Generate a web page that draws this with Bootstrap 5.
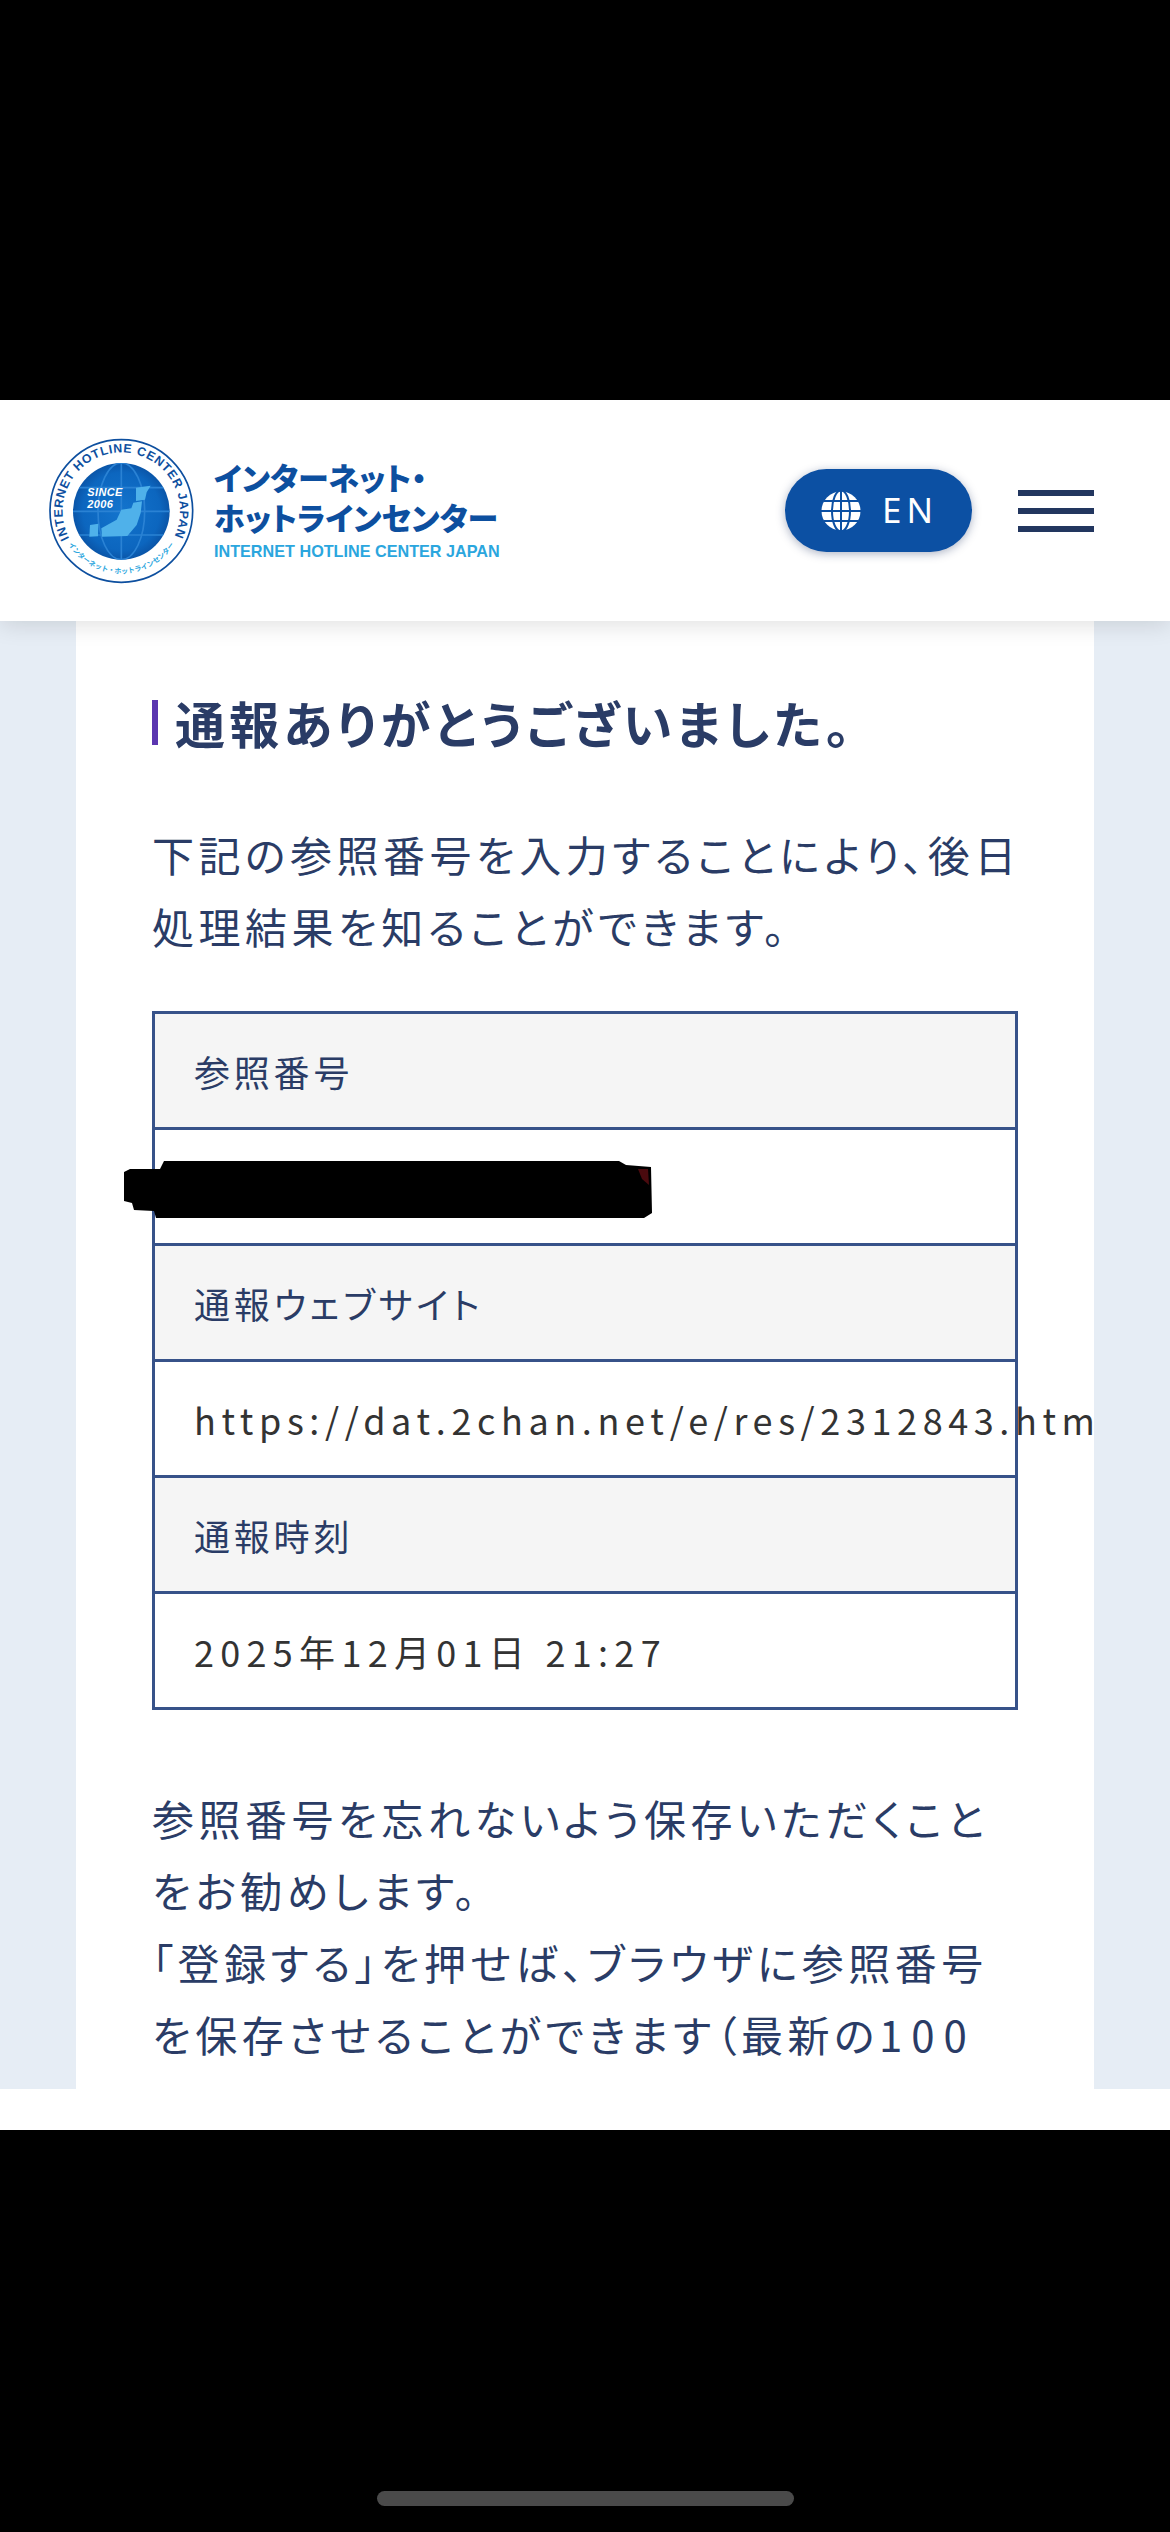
<!DOCTYPE html>
<html lang="ja">
<head>
<meta charset="utf-8">
<title>通報ありがとうございました。</title>
<link href="https://cdn.jsdelivr.net/npm/bootstrap@5.3.0/dist/css/bootstrap.min.css" rel="stylesheet">
<style>
html,body{background:#000;margin:0}
body{width:1170px;height:2532px;overflow:hidden;font-family:"Noto Sans CJK JP","Liberation Sans",sans-serif;color:#2a3c66}
.bar-black-top{height:400px;background:#000}
.site-head{height:221px;background:#fff;padding:0 76px 0 30px;box-shadow:0 4px 22px rgba(0,0,0,.12);position:relative;z-index:2}
.logo-mark{width:180px;height:180px;flex:none}
.logo-words{margin-left:4px;font-weight:900;color:#0d4f9f;font-feature-settings:"palt"}
.logo-jp{font-size:31px;line-height:40px;letter-spacing:0;white-space:nowrap}
.logo-en{font-family:"Liberation Sans",sans-serif;font-weight:700;font-size:16.2px;line-height:26px;color:#2ba6de;white-space:nowrap;margin-top:1px}
.lang-pill{width:187px;height:83px;border-radius:42px;background:#0c50a3;box-shadow:0 2px 10px rgba(20,40,90,.35);color:#fff;gap:21px;font-family:"Noto Sans",sans-serif;font-size:35px;letter-spacing:5px;padding-left:2px}
.lang-pill svg{width:40px;height:42px}
.burger{width:76px;gap:12px;margin-left:46px}
.burger i{display:block;height:6px;background:#22365f}
.page-wrap{height:1468px;background:#e6edf5;padding:0 76px;overflow:hidden}
.sheet{background:#fff;height:100%;padding:79px 76px 0;overflow:hidden;position:relative}
.thanks{border-left:6px solid #5b36b0;padding-left:17px;font-size:50px;line-height:45px;font-weight:700;letter-spacing:4.2px;margin:0 0 73px;color:#2a3c66;font-feature-settings:"palt";white-space:nowrap}
.body-copy{font-size:42px;line-height:72px;letter-spacing:4.5px;font-feature-settings:"palt";margin:0;white-space:nowrap}
.wide-num{letter-spacing:9px}
.ref-table{width:866px;border-collapse:collapse;margin:49px 0 72px;table-layout:fixed}
.ref-table td{height:116px;border:3px solid #375289;padding:0 0 0 39px;font-size:36px;white-space:nowrap;vertical-align:middle;overflow:visible;font-feature-settings:"palt"}
.ref-table td.lab{background:#f5f5f5;color:#2a3c66;letter-spacing:3.8px}
.ref-table td.val{background:#fff;color:#333;letter-spacing:5.6px}
.ref-table td.val.stamp{letter-spacing:6.3px}
.scribble{position:absolute;left:48px;top:538px;width:528px;height:60px}
.white-strip{height:41px;background:#fff}
.bar-black-bottom{height:402px;background:#000;padding-top:361px}
.home-bar{width:417px;height:15px;border-radius:8px;background:#4a4a4a;margin:0 auto 0 377px}
</style>
</head>
<body>
<div class="bar-black-top"></div>
<header class="site-head d-flex align-items-center">
  <svg class="logo-mark" viewBox="0 0 540 540" role="img" aria-label="INTERNET HOTLINE CENTER JAPAN">
    <defs>
      <path id="arcTop" d="M 118 352 A 176 176 0 1 1 430 352"/>
      <path id="arcBot" d="M 104 350 A 188 188 0 0 0 444 350"/>
      <clipPath id="globeClip"><circle cx="274" cy="271" r="145"/></clipPath>
      <radialGradient id="globeFill" cx="50%" cy="50%" r="50%">
        <stop offset="0" stop-color="#1374cd"/><stop offset=".8" stop-color="#0c66bf"/><stop offset="1" stop-color="#0a55a8"/>
      </radialGradient>
    </defs>
    <circle cx="274" cy="270" r="214" fill="#fff" stroke="#0d4f9f" stroke-width="5"/>
    <circle cx="274" cy="271" r="145" fill="url(#globeFill)"/>
    <g clip-path="url(#globeClip)" fill="none" stroke="#2a82d4" stroke-width="5">
      <ellipse cx="274" cy="271" rx="70" ry="145"/>
      <path d="M274 126V416M129 271H419M140 200H408M140 342H408"/>
    </g>
    <g fill="#4fb1ea">
      <path d="M318 200L362 194 350 214 345 236 318 240Z"/>
      <path d="M310 245L336 241 332 276 320 312 292 345 216 347 214 322 260 296 274 266 304 262Z"/>
      <path d="M180 312L205 308 204 346 178 347Z"/>
    </g>
    <text x="172" y="226" fill="#fff" font-family="Liberation Sans, sans-serif" font-weight="700" font-style="italic" font-size="33" letter-spacing="1">SINCE</text>
    <text x="172" y="262" fill="#fff" font-family="Liberation Sans, sans-serif" font-weight="700" font-style="italic" font-size="33" letter-spacing="1">2006</text>
    <text font-family="Liberation Sans, sans-serif" font-weight="700" font-size="37" fill="#0d4f9f"><textPath href="#arcTop" textLength="715" lengthAdjust="spacing">INTERNET HOTLINE CENTER JAPAN</textPath></text>
    <text font-family="Noto Sans CJK JP, sans-serif" font-weight="700" font-size="21" fill="#2ba6de"><textPath href="#arcBot" startOffset="50%" text-anchor="middle">インターネット・ホットラインセンター</textPath></text>
  </svg>
  <div class="logo-words">
    <div class="logo-jp">インターネット・</div>
    <div class="logo-jp">ホットラインセンター</div>
    <div class="logo-en">INTERNET HOTLINE CENTER JAPAN</div>
  </div>
  <div class="lang-pill d-flex align-items-center justify-content-center ms-auto">
    <svg viewBox="0 0 40 42" aria-hidden="true">
      <circle cx="20" cy="21" r="19.5" fill="#fff"/>
      <g fill="none" stroke="#0c50a3" stroke-width="2">
        <ellipse cx="20" cy="21" rx="9" ry="20.5"/>
        <path d="M20 0V42M0 21H40M3 11H37M3 31H37"/>
      </g>
    </svg>
    <span>EN</span>
  </div>
  <div class="burger d-flex flex-column"><i></i><i></i><i></i></div>
</header>
<main class="page-wrap">
  <div class="sheet">
    <h1 class="thanks">通報ありがとうございました。</h1>
    <p class="body-copy">下記の参照番号を入力することにより、後日<br>処理結果を知ることができます。</p>
    <table class="ref-table">
      <tbody>
        <tr><td class="lab">参照番号</td></tr>
        <tr><td class="val">&nbsp;</td></tr>
        <tr><td class="lab">通報ウェブサイト</td></tr>
        <tr><td class="val">https://dat.2chan.net/e/res/2312843.html</td></tr>
        <tr><td class="lab">通報時刻</td></tr>
        <tr><td class="val stamp">2025年12月01日 21:27</td></tr>
      </tbody>
    </table>
    <p class="body-copy">参照番号を忘れないよう保存いただくこと<br>をお勧めします。<br>「登録する」を押せば、ブラウザに参照番号<br>を保存させることができます（最新の<span class="wide-num">100</span></p>
    <svg class="scribble" viewBox="0 0 528 60" aria-hidden="true">
      <path d="M40 2H495L502 6 527 8 528 54 520 59H32L30 52 10 51 8 44 0 42 0 13 6 10 36 10Z" fill="#000"/>
      <path d="M514 10H524L525 26 518 20Z" fill="#4a0a0e"/>
    </svg>
  </div>
</main>
<div class="white-strip"></div>
<div class="bar-black-bottom"><div class="home-bar"></div></div>
<script src="https://cdn.jsdelivr.net/npm/bootstrap@5.3.0/dist/js/bootstrap.bundle.min.js"></script>
</body>
</html>
